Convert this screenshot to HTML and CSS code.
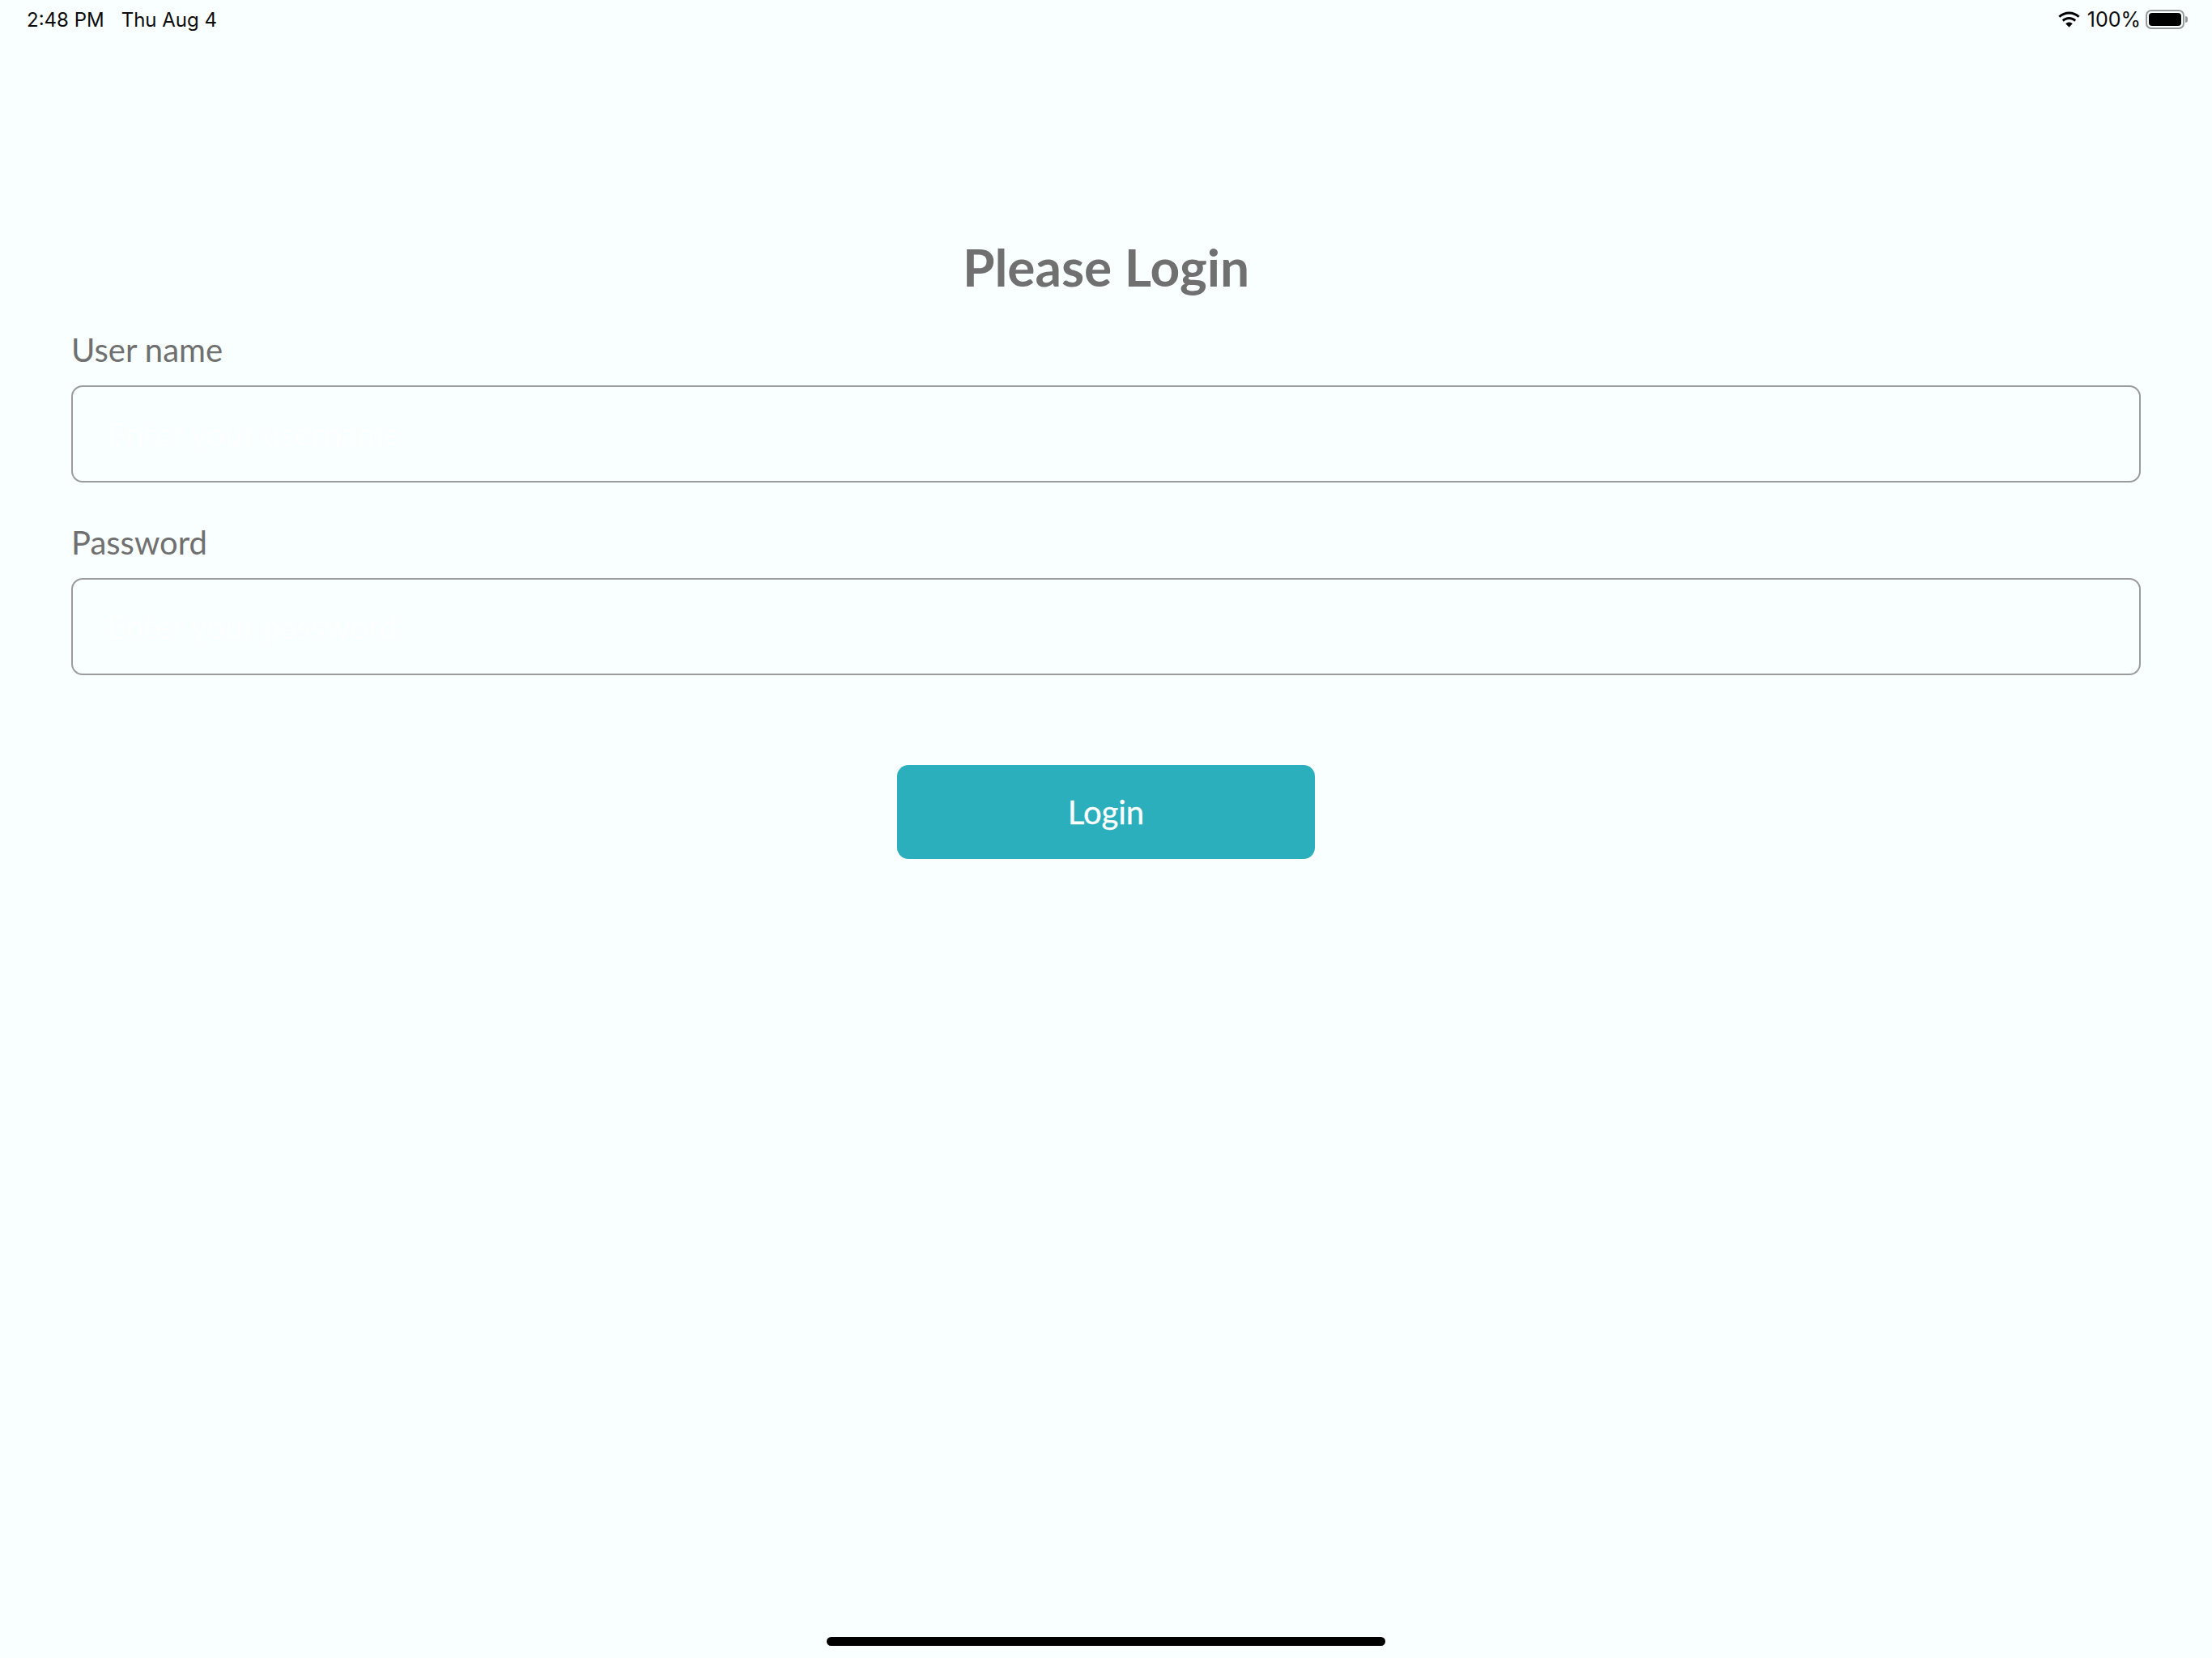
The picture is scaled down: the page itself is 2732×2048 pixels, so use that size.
FILE: index.html
```html
<!DOCTYPE html>
<html lang="en">
<head>
<meta charset="utf-8">
<title>Please Login</title>
<link rel="stylesheet" href="styles.css">
</head>
<body>
<div class="screen">
  <header class="status">
    <div class="status-left"><span>2:48 PM</span><span>Thu Aug 4</span></div>
    <div class="status-right">
      <svg class="wifi" viewBox="0 0 28 20" width="29" height="21" aria-hidden="true">
        <path d="M14 3.200c4.100 0 7.900 1.600 10.700 4.200l2-2.100C23.400 2.200 18.900.3 14 .3S4.600 2.200 1.300 5.300l2 2.100C6.100 4.800 9.900 3.200 14 3.200z"/>
        <path d="M14 9.600c2.500 0 4.700 1 6.400 2.500l2-2.100C20.200 7.900 17.200 6.600 14 6.600s-6.200 1.300-8.400 3.400l2 2.100c1.700-1.500 3.900-2.500 6.400-2.500z"/>
        <path d="M14 12.900c-1.600 0-3 .6-4.100 1.600L14 19l4.100-4.500c-1.100-1-2.500-1.600-4.100-1.600z"/>
      </svg>
      <span class="percent">100%</span>
      <div class="battery"><div class="battery-body"><div class="battery-fill"></div></div><div class="battery-cap"></div></div>
    </div>
  </header>
  <main class="content">
    <h1 class="title">Please Login</h1>
    <form class="form">
      <label class="field">
        <span class="label">User name</span>
        <input class="input" type="text" placeholder="Enter your username">
      </label>
      <label class="field">
        <span class="label">Password</span>
        <input class="input" type="password" placeholder="Enter your password">
      </label>
      <button class="button" type="button">Login</button>
    </form>
  </main>
  <div class="home-indicator"></div>
</div>
</body>
</html>
```
FILE: styles.css
```css
* { box-sizing: border-box; }
html, body { margin: 0; padding: 0; }
body { background: #f9ffff; font-family: "Lato", "Liberation Sans", sans-serif; color: #707070; }
.screen { width: 2732px; height: 2048px; display: flex; flex-direction: column; }
.status { height: 48px; display: flex; justify-content: space-between; align-items: center; padding: 0 30px 0 33px; font-family: "Inter", "Liberation Sans", sans-serif; font-size: 24px; color: #0c0c0c; flex: none; }
.status-left { display: flex; gap: 21px; }
.status-right { display: flex; align-items: center; gap: 6px; }
.percent { font-size: 25px; margin-left: 2px; }
.wifi { fill: #000; }
.battery { display: flex; align-items: center; gap: 1px; }
.battery-body { width: 48px; height: 24px; border: 2px solid #96999b; border-radius: 7px; padding: 2px; }
.battery-fill { width: 100%; height: 100%; background: #000; border-radius: 4px; }
.battery-cap { width: 3px; height: 8px; background: #96999b; border-radius: 0 3px 3px 0; }
.content { flex: 1; padding: 248px 88px 0; }
.title { margin: 0; font-size: 64px; font-weight: 700; line-height: 68px; text-align: center; color: #707070; }
.form { display: flex; flex-direction: column; margin-top: 42px; }
.field { display: flex; flex-direction: column; margin-bottom: 48px; }
.label { font-size: 40px; line-height: 52px; color: #707070; margin-bottom: 18px; }
.input { height: 120px; width: 100%; border: 2px solid #9b9b9b; border-radius: 14px; background: transparent; padding: 0 42px; font-family: inherit; font-size: 40px; outline: none; }
.input::placeholder { color: #fcfffe; opacity: 1; }
.button { align-self: center; margin-top: 63px; width: 516px; height: 116px; border: 0; border-radius: 14px; background: #2cafbc; color: #fff; font-family: inherit; font-size: 40px; -webkit-text-stroke: 0.3px #fff; }
.home-indicator { flex: none; align-self: center; width: 690px; height: 11px; border-radius: 6px; background: #000; margin-bottom: 15px; }
```
